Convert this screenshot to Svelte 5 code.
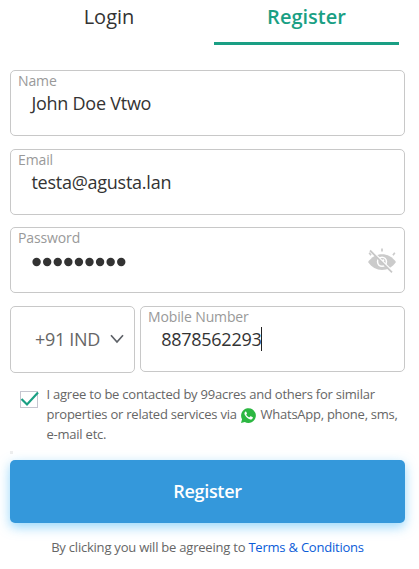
<script>
  const fields = [
    { label: 'Name', value: 'John Doe Vtwo', kind: 'name' },
    { label: 'Email', value: 'testa@agusta.lan', kind: 'email' },
    { label: 'Password', value: '', kind: 'password' }
  ];
</script>

<main>
  <nav>
    <div class="tab"><span>Login</span></div>
    <div class="tab active"><span>Register</span></div>
  </nav>

  <form onsubmit={(e) => e.preventDefault()}>
    {#each fields as field}
      <div class="field {field.kind}">
        <span class="label">{field.label}</span>
        {#if field.kind === 'password'}
          <svg class="dots" width="96" height="10" viewBox="0 0 96 10" role="img" aria-label="Hidden password">
            {#each Array(9) as _, i}
              <circle cx={5.6 + i * 10.58} cy="5" r="4.2" fill="#333" />
            {/each}
          </svg>
          <svg class="eye" width="28" height="26" viewBox="0 0 28 26" fill="none" aria-hidden="true">
            <path d="M0 14C7 3.5 21 3.5 28 14C21 24.5 7 24.5 0 14Z" fill="#cbcbcb" />
            <circle cx="14" cy="13.7" r="5.2" fill="#fff" />
            <circle cx="14" cy="13.7" r="3.7" fill="#cbcbcb" />
            <circle cx="15.3" cy="12.3" r="1.1" fill="#fff" />
            <path d="M3.3 2L25.5 24" stroke="#fff" stroke-width="1.4" />
            <path d="M2 2.5L24 24.3" stroke="#c8c8c8" stroke-width="1.8" />
            <path d="M14 .5V3.5M1.2 4.8L3 7.2M26.8 4.8L25 7.2" stroke="#cbcbcb" stroke-width="1.7" />
          </svg>
        {:else}
          <span class="value">{field.value}</span>
        {/if}
      </div>
    {/each}

    <div class="phone">
      <div class="country">
        <span>+91 IND</span>
        <svg width="14" height="10" viewBox="0 0 14 10" fill="none" aria-hidden="true">
          <path d="M1 1.3L7 8L13 1.3" stroke="#5d6167" stroke-width="1.7" />
        </svg>
      </div>
      <div class="field mobile">
        <span class="label">Mobile Number</span>
        <span class="value">8878562293<i class="caret"></i></span>
      </div>
    </div>

    <div class="consent">
      <span class="check">
        <svg width="20" height="18" viewBox="0 0 20 18" fill="none" aria-hidden="true">
          <path d="M1.5 8L7 13.5L18 1.5" stroke="#1a9f84" stroke-width="2.2" />
        </svg>
      </span>
      <p>
        <span>I agree to be contacted by 99acres and others for similar</span><br />
        <span>properties or related services via</span>
        <svg class="wa" width="15" height="15" viewBox="0 0 24 24" aria-hidden="true">
          <path d="M0 24L1.7 18A11.8 11.8 0 1 1 6.1 22.4Z" fill="#2cb742" />
          <path d="M8.1 5.7C7.7 5.2 7.2 5.4 6.7 5.8C5.3 7.1 5.1 9 6.3 11.2C8.2 14.8 11 17.2 14.8 18.2C16.6 18.6 18.5 17.6 18.9 15.9C19.1 15 18.9 14.7 18.2 14.4L15.7 13.2C15.2 13 14.9 13.1 14.6 13.5L13.6 14.7C13.3 15 13 15 12.6 14.8C10.8 14 9.5 12.8 8.5 11.1C8.3 10.8 8.4 10.5 8.6 10.3L9.4 9.2C9.6 8.9 9.6 8.7 9.5 8.4Z" fill="#fff" />
        </svg>
        <span class="channels">WhatsApp, phone, sms,</span><br />
        <span>e-mail etc.</span>
      </p>
    </div>

    <div class="tick"></div>
    <button type="submit">Register</button>
    <div class="terms">By clicking you will be agreeing to <a href="#terms">Terms &amp; Conditions</a></div>
  </form>
</main>

<style>
  :global(body) {
    background: #fff;
  }
  main {
    box-sizing: border-box;
    width: 419px;
    height: 569px;
    overflow: hidden;
    font-family: 'Open Sans', 'Noto Sans', sans-serif;
    color: #333;
    white-space: nowrap;
  }
  nav {
    display: flex;
    height: 45px;
    padding-left: 16px;
    gap: 13px;
  }
  .tab {
    box-sizing: border-box;
    width: 185px;
    padding-top: 3px;
    text-align: center;
    font-size: 20px;
    line-height: 28px;
  }
  .tab:first-child {
    padding-left: 1px;
  }
  .active {
    color: #1a9f84;
    font-weight: 600;
    border-bottom: 3px solid #1a9f84;
  }
  form {
    width: 395px;
    margin: 25px 0 0 10px;
  }
  .field {
    box-sizing: border-box;
    position: relative;
    display: flex;
    flex-direction: column;
    align-items: flex-start;
    height: 66px;
    padding-left: 7px;
    border: 1px solid #c8c8c8;
    border-radius: 5px;
    margin-bottom: 13px;
  }
  .email {
    margin-bottom: 12px;
  }
  .label {
    color: #999;
    font-size: 14px;
    line-height: 20px;
    letter-spacing: -0.13px;
  }
  .value {
    margin-left: 13.4px;
    font-size: 18px;
    line-height: 24px;
    letter-spacing: -0.25px;
  }
  .mobile .value {
    margin-left: 13.3px;
    letter-spacing: -0.28px;
  }
  .dots {
    margin: 9px 0 0 13px;
  }
  .eye {
    position: absolute;
    right: 8px;
    top: 20px;
  }
  .phone {
    display: flex;
    align-items: flex-start;
    gap: 5px;
    height: 67px;
  }
  .country {
    box-sizing: border-box;
    display: flex;
    align-items: center;
    width: 125px;
    height: 67px;
    border: 1px solid #c8c8c8;
    border-radius: 5px;
    padding: 0 0 2px 24px;
    color: #666;
    font-size: 18px;
    letter-spacing: -0.3px;
  }
  .country svg {
    margin-left: 10px;
  }
  .mobile {
    width: 265px;
    margin: 0;
  }
  .caret {
    display: inline-block;
    width: 1px;
    height: 24px;
    vertical-align: top;
    background: #222;
  }
  .consent {
    display: flex;
    height: 78px;
    padding: 11px 0 0 10px;
    box-sizing: border-box;
  }
  .check {
    box-sizing: border-box;
    width: 18px;
    height: 17px;
    margin-top: 7px;
    border: 1px solid #c6c6d0;
  }
  .check svg {
    display: block;
    margin: -1px;
  }
  p {
    margin: 0 0 0 8.5px;
    font-size: 13px;
    line-height: 20px;
    color: #666;
    letter-spacing: -0.23px;
  }
  .channels {
    margin-left: 1px;
    letter-spacing: -0.26px;
  }
  .wa {
    margin-left: 1.6px;
    vertical-align: -4px;
  }
  .tick {
    width: 3px;
    height: 3px;
    background: #eee;
  }
  button {
    display: block;
    width: 395px;
    height: 63px;
    margin-top: 6px;
    padding: 0 0 2px;
    border: 0;
    border-radius: 5px;
    background: #3498db;
    color: #fff;
    font: 600 18px 'Open Sans', sans-serif;
    letter-spacing: -0.3px;
    box-shadow: 0 4px 12px rgba(65, 182, 247, 0.55);
  }
  .terms {
    margin-top: 14px;
    text-align: center;
    font-size: 13px;
    line-height: 20px;
    letter-spacing: -0.22px;
    color: #666;
  }
  a {
    color: #0a5bd8;
    text-decoration: none;
  }
</style>
